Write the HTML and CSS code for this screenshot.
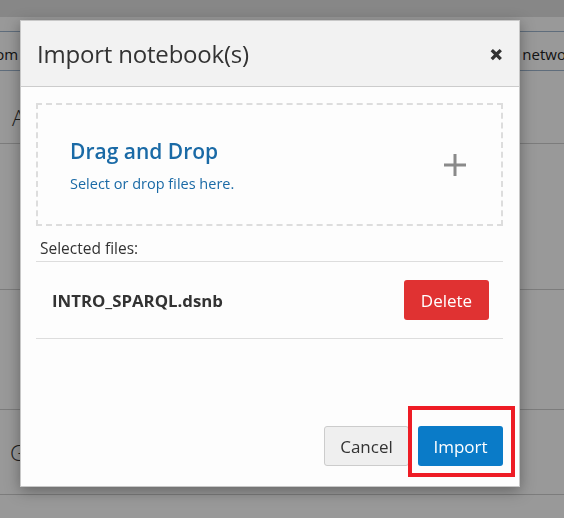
FILE: index.html
```html
<!DOCTYPE html>
<html>
<head>
<meta charset="utf-8">
<link rel="stylesheet" href="styles.css">
</head>
<body>
<div class="page">
  <div class="topbar"></div>
  <div class="thead">
    <span class="th-left">Custom</span>
    <span class="th-right">network</span>
  </div>
  <div class="row row-a"><span class="cell">A</span></div>
  <div class="row row-b"></div>
  <div class="row row-c"></div>
  <div class="row row-d"><span class="cell">G</span></div>
</div>
<div class="overlay"></div>

<div class="modal">
  <div class="modal-header">
    <h1 class="modal-title">Import notebook(s)</h1>
    <span class="close">&#x2715;</span>
  </div>
  <div class="modal-body">
    <div class="dropzone">
      <div class="dz-text">
        <div class="dz-title">Drag and Drop</div>
        <div class="dz-sub">Select or drop files here.</div>
      </div>
      <svg class="dz-plus" width="24" height="24" viewBox="0 0 24 24">
        <rect x="10.5" y="1" width="3" height="22" fill="#8a8a8a"/>
        <rect x="1" y="10.5" width="22" height="3" fill="#8a8a8a"/>
      </svg>
    </div>
    <div class="sel-label">Selected files:</div>
    <div class="file-row">
      <span class="file-name">INTRO_SPARQL.dsnb</span>
      <button class="btn btn-delete">Delete</button>
    </div>
  </div>
  <div class="modal-footer">
    <button class="btn btn-cancel">Cancel</button>
    <button class="btn btn-import">Import</button>
    <div class="highlight"></div>
  </div>
</div>
</body>
</html>
```

FILE: styles.css
```css
* { box-sizing: border-box; }
html, body {
  margin: 0;
  padding: 0;
  width: 564px;
  height: 518px;
  overflow: hidden;
  font-family: "Open Sans", "Noto Sans", sans-serif;
  background: #ffffff;
}
.page {
  width: 564px;
  height: 518px;
  background: #ffffff;
}
.topbar {
  height: 17px;
  background: #e2e2e2;
}
.thead {
  margin-top: 14px;
  height: 40px;
  padding-top: 6px;
  border-top: 1px solid #9fb6cf;
  border-bottom: 1px solid #9fb6cf;
  display: flex;
  justify-content: space-between;
  align-items: center;
  font-size: 15px;
  color: #222;
  overflow: hidden;
  white-space: nowrap;
}
.th-left { margin-left: -36px; }
.th-right { margin-right: -16px; }
.row {
  border-bottom: 1px solid #cfcfcf;
  display: flex;
  align-items: center;
  font-size: 22px;
  color: #333;
  font-weight: 300;
}
.row-a { height: 73px; }
.row-b { height: 146px; }
.row-c { height: 120px; }
.row-d { height: 85px; }
.cell { margin-left: 10px; }
.row-a .cell { margin-left: 12px; margin-top: 20px; }

.overlay {
  position: fixed;
  inset: 0;
  background: rgba(0, 0, 0, 0.4);
}

.modal {
  position: absolute;
  left: 20px;
  top: 20px;
  width: 500px;
  height: 467px;
  background: #fdfdfd;
  border: 1px solid #c8c8c8;
  box-shadow: 0 4px 14px rgba(0, 0, 0, 0.35);
  display: flex;
  flex-direction: column;
}
.modal-header {
  height: 66px;
  flex: none;
  background: #f2f2f2;
  border-bottom: 1px solid #cccccc;
  display: flex;
  align-items: center;
  justify-content: space-between;
  padding: 0 16px 0 16px;
}
.modal-title {
  margin: 0;
  font-size: 24px;
  font-weight: 400;
  color: #333;
  letter-spacing: -0.2px;
}
.close {
  font-size: 15px;
  font-weight: 700;
  color: #333;
  -webkit-text-stroke: 1.2px #333;
}
.modal-body {
  padding: 16px 16px 0 15px;
  flex: 1;
}
.dropzone {
  height: 123px;
  border: 2px dashed #dddddd;
  display: flex;
  align-items: center;
  justify-content: space-between;
  padding: 0 34px 0 32px;
}
.dz-title {
  font-size: 21px;
  font-weight: 600;
  color: #1a6aa6;
  line-height: 28px;
}
.dz-sub {
  margin-top: 9px;
  font-size: 14.5px;
  color: #1a6aa6;
}
.sel-label {
  margin-top: 10px;
  padding-left: 4px;
  font-size: 15.5px;
  color: #333;
  line-height: 24px;
  border-bottom: 1px solid #dddddd;
  height: 26px;
}
.file-row {
  height: 77px;
  border-bottom: 1px solid #dddddd;
  display: flex;
  align-items: center;
  justify-content: space-between;
  padding: 0 14px 0 16px;
}
.file-name {
  font-size: 16.8px;
  font-weight: 700;
  color: #333;
}
.btn {
  font-family: "Open Sans", "Noto Sans", sans-serif;
  font-size: 17px;
  height: 40px;
  width: 85px;
  border-radius: 3px;
  border: 1px solid transparent;
  padding: 0;
}
.btn-delete {
  background: #e03232;
  color: #fff;
}
.modal-footer {
  position: relative;
  height: 60px;
  flex: none;
  display: flex;
  align-items: flex-start;
  justify-content: flex-end;
  gap: 9px;
  padding-right: 16px;
}
.btn-cancel {
  background: #efefef;
  border-color: #cccccc;
  color: #333;
}
.btn-import {
  background: #0a7bc8;
  color: #fff;
}
.highlight {
  position: absolute;
  left: 387px;
  top: -20px;
  width: 107px;
  height: 71px;
  border: 4px solid #ee1c25;
}
```
